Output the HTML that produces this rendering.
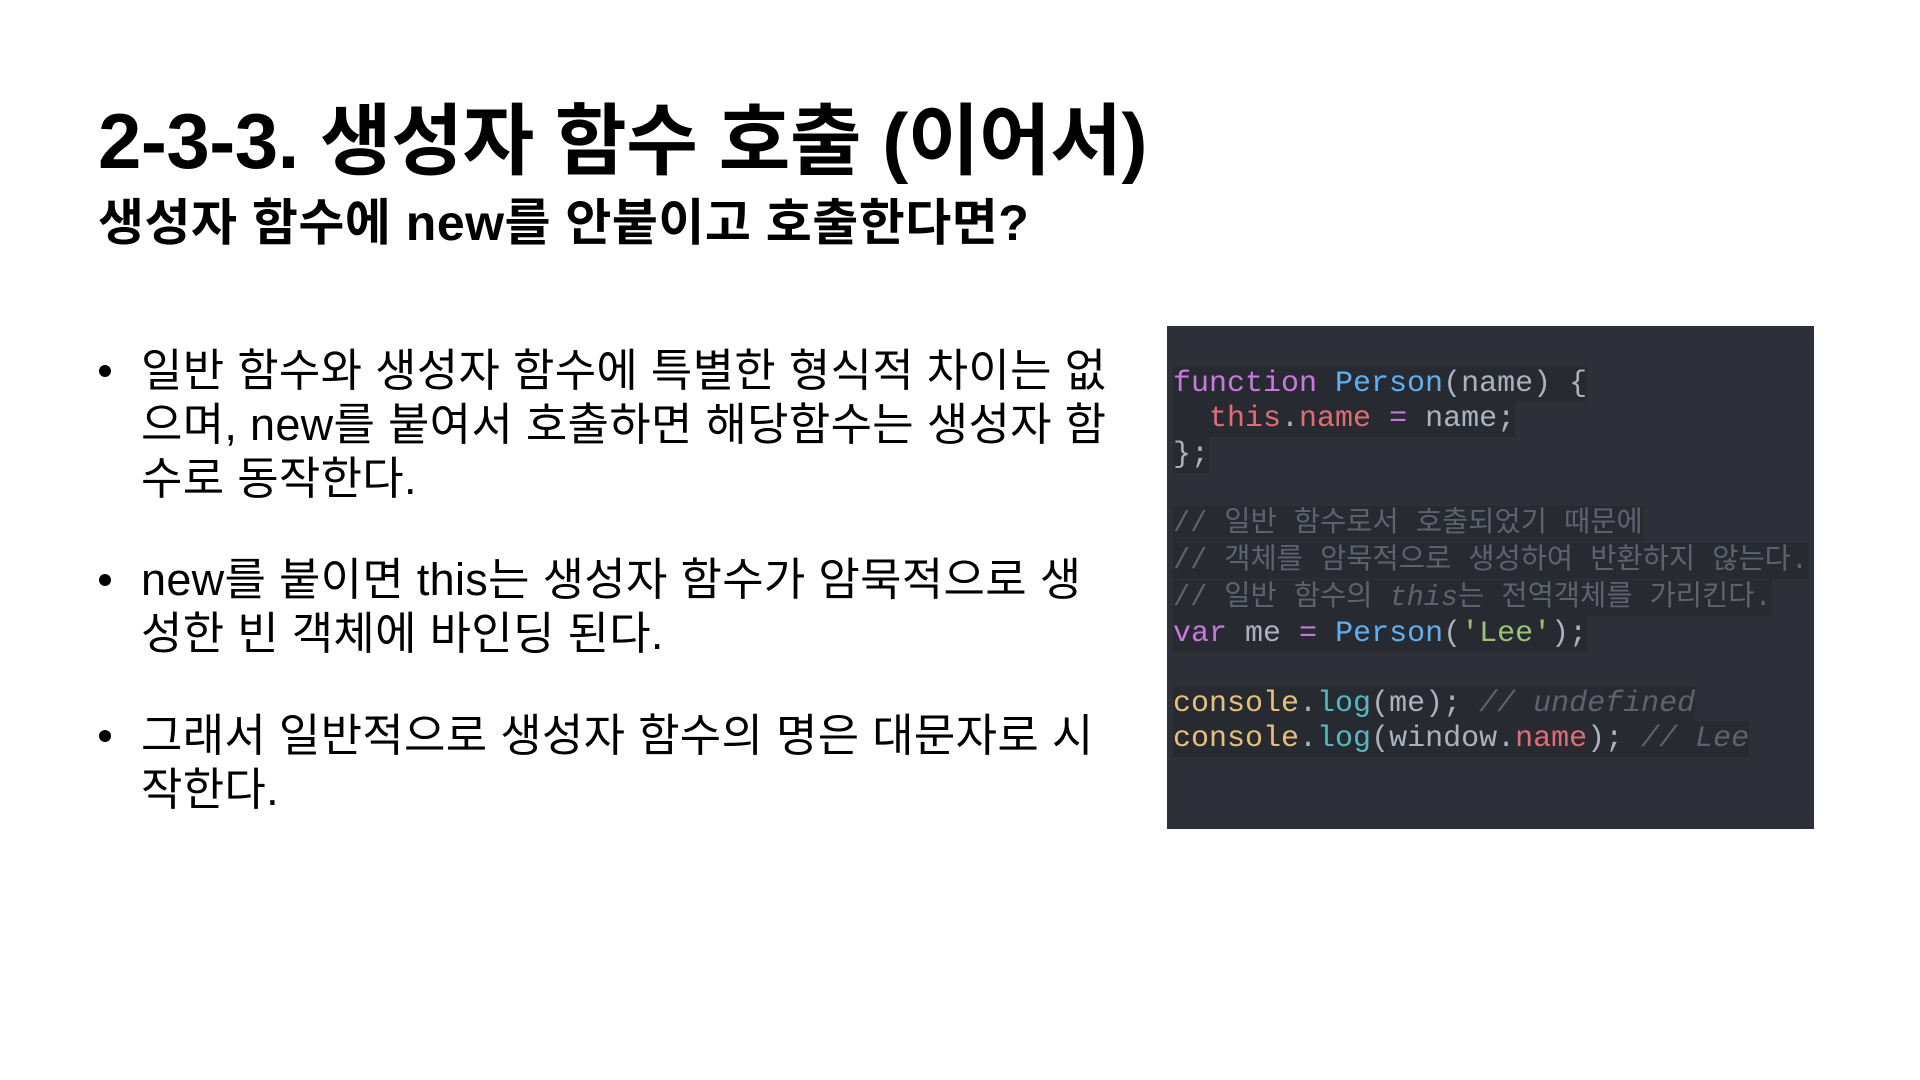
<!DOCTYPE html>
<html><head><meta charset="utf-8">
<style>
html,body{margin:0;padding:0;background:#fff;width:1920px;height:1080px;overflow:hidden;position:relative}
.k{font-family:"Liberation Sans","Noto Sans CJK KR",sans-serif;color:#000;position:absolute;white-space:nowrap}
.t{left:98px;top:96px;font-size:78px;font-weight:bold;letter-spacing:-0.5px;line-height:90px}
.s{left:98px;top:195px;font-size:50px;font-weight:bold;letter-spacing:0.5px;line-height:56px}
.b{font-size:45px;line-height:54px;left:141px;letter-spacing:0.3px}
.dot{position:absolute;width:12px;height:12px;border-radius:50%;background:#000;left:99px}
.code{position:absolute;left:1167px;top:326px;width:647px;height:503px;background:#2e3039;overflow:hidden}
.ln{position:absolute;left:6px;height:36px;line-height:36px;font-family:"Liberation Mono","Noto Sans CJK KR",monospace;font-size:30px;white-space:pre;background:#282a31;color:#abb2bf}
.cm{color:#5c6370;font-size:28.5px}
.p{color:#c678dd}.bl{color:#61afef}.r{color:#e06c75}.g{color:#98c379}.y{color:#e5c07b}.c{color:#56b6c2}
</style></head><body>
<div class="k t">2-3-3. 생성자 함수 호출 (이어서)</div>
<div class="k s">생성자 함수에 new를 안붙이고 호출한다면?</div>

<div class="dot" style="top:365px"></div>
<div class="k b" style="top:344px">일반 함수와 생성자 함수에 특별한 형식적 차이는 없<br>으며, new를 붙여서 호출하면 해당함수는 생성자 함<br>수로 동작한다.</div>
<div class="dot" style="top:574px"></div>
<div class="k b" style="top:553px">new를 붙이면 this는 생성자 함수가 암묵적으로 생<br>성한 빈 객체에 바인딩 된다.</div>
<div class="dot" style="top:730px"></div>
<div class="k b" style="top:709px">그래서 일반적으로 생성자 함수의 명은 대문자로 시<br>작한다.</div>

<div class="code">
<div class="ln" style="top:40px"><span class="p">function</span> <span class="bl">Person</span>(name) {</div>
<div class="ln" style="top:75px">  <span class="r">this</span>.<span class="r">name</span> <span class="p">=</span> name;</div>
<div class="ln" style="top:111px">};</div>
<div class="ln cm" style="top:180px">// 일반 함수로서 호출되었기 때문에</div>
<div class="ln cm" style="top:217px">// 객체를 암묵적으로 생성하여 반환하지 않는다.</div>
<div class="ln cm" style="top:254px">// 일반 함수의 <i>this</i>는 전역객체를 가리킨다.</div>
<div class="ln" style="top:290px"><span class="p">var</span> me <span class="p">=</span> <span class="bl">Person</span>(<span class="g">'Lee'</span>);</div>
<div class="ln" style="top:360px"><span class="y">console</span>.<span class="c">log</span>(me); <i class="cm" style="font-size:30px">// undefined</i></div>
<div class="ln" style="top:395px"><span class="y">console</span>.<span class="c">log</span>(window.<span class="r">name</span>); <i class="cm" style="font-size:30px">// Lee</i></div>
</div>
</body></html>
